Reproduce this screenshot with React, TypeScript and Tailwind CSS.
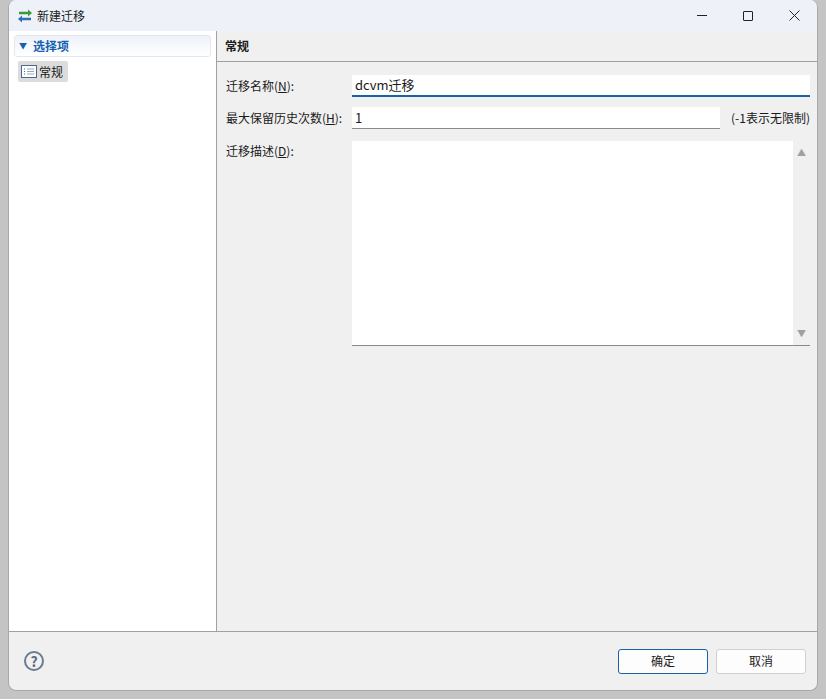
export default function App() {
  const f = { fontFamily: '"Microsoft YaHei","Noto Sans CJK SC",sans-serif' };
  return (
    <div className="w-[826px] h-[699px] bg-[#c4c4c4] pl-[8px] pr-[8px] pb-[8px] text-[12px] text-[#1a1a1a]" style={f}>
      <div className="w-full h-full bg-[#f0f0f0] rounded-b-[8px] rounded-t-[8px] flex flex-col overflow-hidden border border-[#a8a8a8] border-t-0">
        <div className="h-[31px] bg-[#eef2f8] flex items-center shrink-0">
          <svg width="18" height="14" viewBox="0 0 18 14" className="ml-[7px] mr-[3px]">
            <path d="M3 4h10" stroke="#3a9a3a" strokeWidth="2.5" />
            <path d="M12 0.5l4 3.5-4 3.5z" fill="#3a9a3a" />
            <path d="M5 10h10" stroke="#2e6fb8" strokeWidth="2.5" />
            <path d="M6 6.5l-4 3.5 4 3.5z" fill="#2e6fb8" />
          </svg>
          <span className="text-[12px]">新建迁移</span>
          <div className="ml-auto flex items-center">
            <div className="w-[46px] flex justify-center"><div className="w-[10px] h-[1px] bg-[#222]" /></div>
            <div className="w-[46px] flex justify-center"><div className="w-[10px] h-[10px] border border-[#222] rounded-[1px]" /></div>
            <div className="w-[46px] flex justify-center">
              <svg width="11" height="11" viewBox="0 0 11 11"><path d="M0.5 0.5l10 10M10.5 0.5l-10 10" stroke="#222" strokeWidth="1" /></svg>
            </div>
          </div>
        </div>
        <div className="flex flex-1 min-h-0 border-b border-[#a0a0a0]">
          <div className="w-[208px] bg-white border-r border-[#a0a0a0] shrink-0 pt-[4px] px-[5px]">
            <div className="h-[22px] rounded-[3px] border border-[#e4e8ee] bg-gradient-to-b from-[#eef3fa] to-white flex items-center pl-[4px] text-[#1560b0] font-bold">
              <span className="text-[8px] mr-[6px]">▼</span>选择项
            </div>
            <div className="mt-[4px] ml-[4px] w-[50px] h-[21px] bg-[#dcdcdc] rounded-[2px] flex items-center pl-[3px]">
              <svg width="16" height="13" viewBox="0 0 16 13" className="mr-[2px]">
                <rect x="0.5" y="0.5" width="15" height="12" fill="#fff" stroke="#4a6a94" />
                <path d="M3 4h1M3 6.5h1M3 9h1" stroke="#4a6a94" />
                <path d="M6 4h7M6 6.5h7M6 9h7" stroke="#9aa6b6" />
              </svg>
              常规
            </div>
          </div>
          <div className="flex-1 flex flex-col">
            <div className="h-[31px] border-b border-[#a0a0a0] flex items-center pl-[8px] font-bold text-[12px]">常规</div>
            <div className="pl-[9px] pr-[7px] pt-[13px]">
              <div className="flex items-center h-[22px]">
                <span className="w-[126px]">迁移名称(<u>N</u>):</span>
                <div className="flex-1 h-[22px] bg-white border-b-2 border-[#1a62a8] pl-[3px] flex items-center text-[13px]">dcvm迁移</div>
              </div>
              <div className="flex items-center h-[22px] mt-[10px]">
                <span className="w-[126px]">最大保留历史次数(<u>H</u>):</span>
                <div className="w-[368px] h-[22px] bg-white border-b border-[#8a8a8a] pl-[3px] flex items-center text-[13px]">1</div>
                <span className="ml-[11px]">(-1表示无限制)</span>
              </div>
              <div className="flex mt-[12px]">
                <span className="w-[126px] pt-[1px]">迁移描述(<u>D</u>):</span>
                <div className="flex-1 h-[205px] bg-white border-b border-[#8a8a8a] flex">
                  <div className="flex-1" />
                  <div className="w-[17px] bg-[#f0f0f0] flex flex-col items-center justify-between py-[5px] text-[9px] text-[#a0a0a0]">
                    <span>▲</span><span>▼</span>
                  </div>
                </div>
              </div>
            </div>
          </div>
        </div>
        <div className="h-[58px] shrink-0 flex items-center px-[15px]">
          <div className="w-[20px] h-[20px] rounded-full border-2 border-[#6a7a90] flex items-center justify-center text-[#5a6a80] font-bold text-[14px]">?</div>
          <div className="ml-auto flex gap-[8px] mr-[-4px]">
            <button className="w-[90px] h-[25px] bg-[#fdfdfd] border border-[#1a62a8] rounded-[3px] text-[12px]" style={f}>确定</button>
            <button className="w-[90px] h-[25px] bg-[#fdfdfd] border border-[#d0d0d0] rounded-[3px] text-[12px]" style={f}>取消</button>
          </div>
        </div>
      </div>
    </div>
  );
}
